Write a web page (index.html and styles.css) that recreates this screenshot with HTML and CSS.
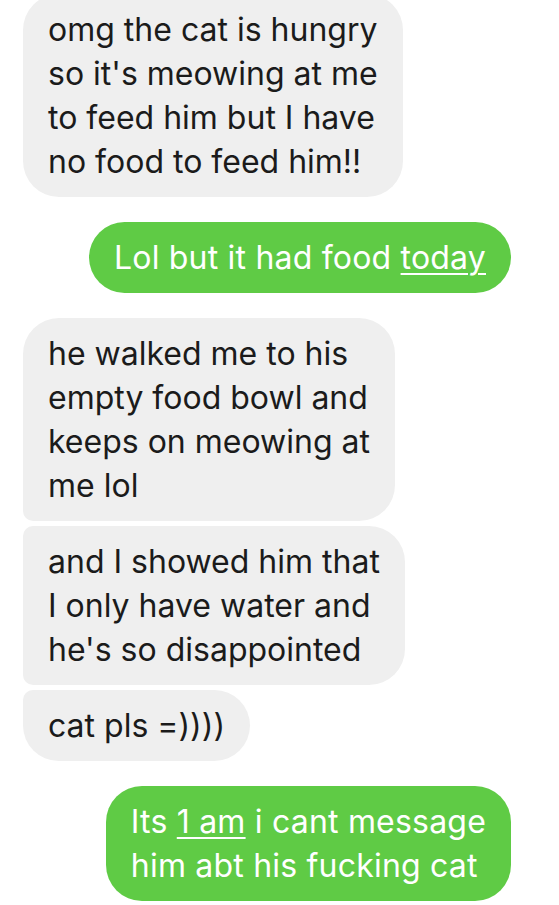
FILE: index.html
```html
<!DOCTYPE html>
<html lang="en">
<head>
  <meta charset="UTF-8" />
  <title>Messages</title>
  <link rel="stylesheet" href="styles.css">
</head>
<body>
  <div class="thread">

    <!-- incoming -->
    <div class="bubble in first-cut">omg the cat is hungry<br>so it's meowing at me<br>to feed him but I have<br>no food to feed him!!</div>

    <!-- outgoing -->
    <div class="bubble out gap">Lol but it had food <u>today</u></div>

    <!-- incoming group -->
    <div class="bubble in gap group-top">he walked me to his<br>empty food bowl and<br>keeps on meowing at<br>me lol</div>
    <div class="bubble in small-gap group-mid">and I showed him that<br>I only have water and<br>he's so disappointed</div>
    <div class="bubble in small-gap group-end">cat pls =))))</div>

    <!-- outgoing -->
    <div class="bubble out gap">Its <u>1 am</u> i cant message<br>him abt his fucking cat</div>

  </div>
</body>
</html>
```

FILE: styles.css
```css
* {
  margin: 0;
  padding: 0;
  box-sizing: border-box;
}

body {
  background: #fff;
  font-family: Inter, "Noto Sans", sans-serif;
  overflow: hidden;
}

.thread {
  display: flex;
  flex-direction: column;
  padding: 0 48px 0 23px;
  margin-top: -6px;
}

/* BULLES */
.bubble {
  width: fit-content;
  font-size: 32px;
  line-height: 44px;
  padding: 14px 25px 13px;
  border-radius: 36px;
}

.bubble u {
  text-decoration-thickness: 2px;
  text-underline-offset: 4px;
}

.in {
  align-self: flex-start;
  background: #efefef;
  color: #1b1b1b;
}

.out {
  align-self: flex-end;
  background: #5fcb45;
  color: #fff;
  letter-spacing: 0.2px;
}

.gap { margin-top: 25px; }
.small-gap { margin-top: 5px; }

/* coins des groupes */
.group-top { border-bottom-left-radius: 10px; }
.group-mid { border-top-left-radius: 10px; border-bottom-left-radius: 10px; }
.group-end { border-top-left-radius: 10px; }
```
